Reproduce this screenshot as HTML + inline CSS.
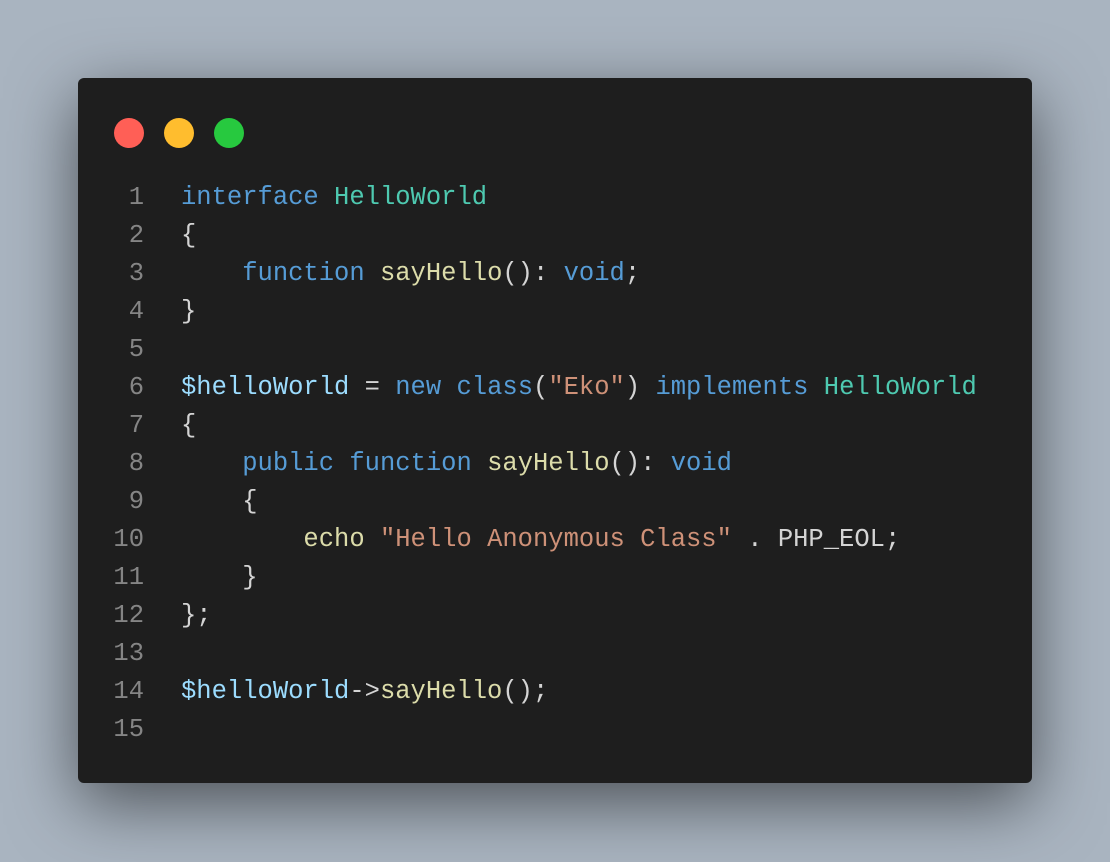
<!DOCTYPE html>
<html><head><style>
body{margin:0;width:1110px;height:862px;background:#a9b4c0;position:relative;overflow:hidden}
.win{position:absolute;left:78px;top:78px;width:954px;height:705px;background:#1e1e1e;border-radius:6px;box-shadow:0 20px 68px rgba(0,0,0,.55)}
.dot{position:absolute;top:40px;width:30px;height:30px;border-radius:50%}
.code{position:absolute;left:0;top:100px;font-family:"Liberation Mono",monospace;font-size:25.5px;line-height:38px;color:#d4d4d4;white-space:pre}
.ln{position:absolute;left:0;top:1px;width:66px;text-align:right;color:#858585}
.tx{position:absolute;left:103px;top:1px}
.k{color:#569cd6}.t{color:#4ec9b0}.f{color:#dcdcaa}.s{color:#ce9178}.v{color:#9cdcfe}
</style></head><body>
<div class="win">
<div class="dot" style="left:36px;background:#ff5f56"></div>
<div class="dot" style="left:86px;background:#ffbd2e"></div>
<div class="dot" style="left:136px;background:#27c93f"></div>
<div class="code"><div class="ln">1
2
3
4
5
6
7
8
9
10
11
12
13
14
15</div><div class="tx"><span class="k">interface</span> <span class="t">HelloWorld</span>
{
    <span class="k">function</span> <span class="f">sayHello</span>(): <span class="k">void</span>;
}

<span class="v">$helloWorld</span> = <span class="k">new</span> <span class="k">class</span>(<span class="s">"Eko"</span>) <span class="k">implements</span> <span class="t">HelloWorld</span>
{
    <span class="k">public</span> <span class="k">function</span> <span class="f">sayHello</span>(): <span class="k">void</span>
    {
        <span class="f">echo</span> <span class="s">"Hello Anonymous Class"</span> . PHP_EOL;
    }
};

<span class="v">$helloWorld</span>-&gt;<span class="f">sayHello</span>();
</div></div>
</div>
</body></html>
